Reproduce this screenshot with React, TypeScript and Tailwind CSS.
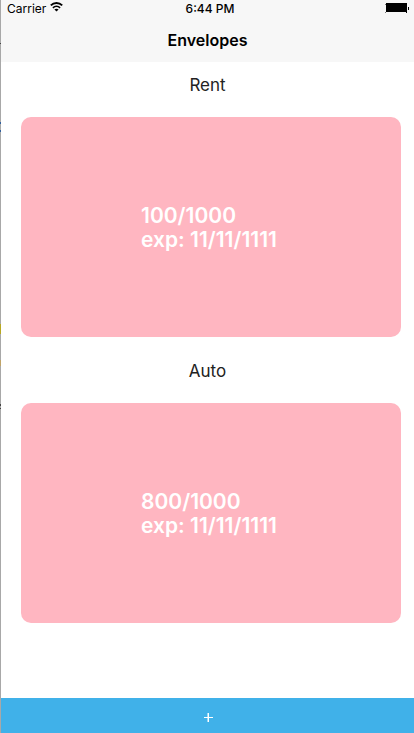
type Envelope = { name: string; spent: number; budget: number; expires: string };

const envelopes: Envelope[] = [
  { name: "Rent", spent: 100, budget: 1000, expires: "11/11/1111" },
  { name: "Auto", spent: 800, budget: 1000, expires: "11/11/1111" },
];

function WifiIcon() {
  return (
    <svg width="13" height="10" viewBox="0 0 13 10" fill="none" stroke="black" aria-label="Wi-Fi">
      <path d="M0.8 3.4C4 0.2 9 0.2 12.2 3.4" strokeWidth="1.9" />
      <path d="M2.9 5.8C5 3.8 8 3.8 10.1 5.8" strokeWidth="1.6" />
      <path d="M6.5 9.6L4.4 7.5C5.6 6.4 7.4 6.4 8.6 7.5Z" fill="black" stroke="none" />
    </svg>
  );
}

function BatteryIcon() {
  return (
    <svg width="24" height="10" viewBox="0 0 24 10" aria-label="Battery full">
      <path d="M1 0H22V10H21V9H1Z" fill="black" />
      <path d="M0 1H1V2H0ZM0 9H1V10H0Z" fill="#777777" />
      <rect x="23" y="4" width="1" height="3" fill="black" />
    </svg>
  );
}

function StatusBar() {
  return (
    <div className="grid h-5 grid-cols-3 items-start pt-px pr-[5px] pl-1.5 text-[12px] leading-4">
      <div className="flex gap-1">
        <span>Carrier</span>
        <span className="pt-px">
          <WifiIcon />
        </span>
      </div>
      <span className="pl-1 text-center font-medium">6:44 PM</span>
      <div className="flex justify-end pt-0.5">
        <BatteryIcon />
      </div>
    </div>
  );
}

function EnvelopeCard({ envelope }: { envelope: Envelope }) {
  return (
    <section>
      <h2 className="text-center text-[17px] leading-6 text-[#222222]">{envelope.name}</h2>
      <div className="mt-5 mr-[13px] ml-5 flex h-[220px] items-center justify-center rounded-[10px] bg-[#ffb6c1] pt-0.5">
        <p className="w-[140px] text-[21px] leading-6 font-semibold whitespace-nowrap text-white">
          {envelope.spent}/{envelope.budget}
          <br />
          exp: {envelope.expires}
        </p>
      </div>
    </section>
  );
}

export default function App() {
  return (
    <div className="flex min-h-screen bg-white font-['Inter','Liberation_Sans',sans-serif] text-black">
      <div
        aria-hidden="true"
        className="w-px shrink-0 bg-[linear-gradient(#a8a8a8_0_43px,#444444_43px_44px,#a8a8a8_44px_122px,#315f9c_122px_124px,#a8a8a8_124px_130px,#315f9c_130px_132px,#a8a8a8_132px_324px,#b8a822_324px_334px,#a8a8a8_334px_360px,#c0a468_360px_366px,#a8a8a8_366px_404px,#444444_404px_406px,#a8a8a8_406px_408px,#444444_408px_409px,#a8a8a8_409px)]"
      />
      <div className="flex min-w-0 flex-1 flex-col">
        <header className="h-[62px] bg-[#f7f7f7]">
          <StatusBar />
          <h1 className="pt-2 text-center text-[16px] leading-6 font-semibold">Envelopes</h1>
        </header>
        <main className="flex flex-1 flex-col gap-[22px] pt-[11px] pb-5">
          {envelopes.map((envelope) => (
            <EnvelopeCard key={envelope.name} envelope={envelope} />
          ))}
        </main>
        <button
          type="button"
          aria-label="Add envelope"
          className="flex h-[35px] items-center justify-center bg-[#40b1e9] pl-px text-white"
        >
          <svg width="9" height="9" viewBox="0 0 9 9" stroke="white" strokeWidth="1" className="mt-1">
            <path d="M0 4.5H9M4.5 0V9" />
            <path d="M3.5 0V9" strokeOpacity="0.5" />
          </svg>
        </button>
      </div>
    </div>
  );
}
